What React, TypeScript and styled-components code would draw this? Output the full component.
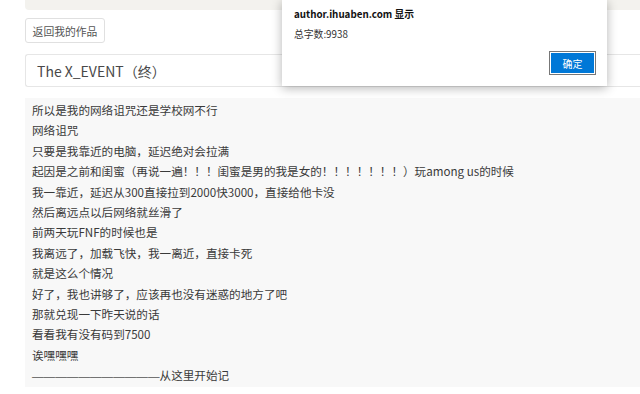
import React from 'react';
import styled, { createGlobalStyle } from 'styled-components';

const lines = [
  '所以是我的网络诅咒还是学校网不行',
  '网络诅咒',
  '只要是我靠近的电脑，延迟绝对会拉满',
  '起因是之前和闺蜜（再说一遍！！！闺蜜是男的我是女的！！！！！！！）玩among us的时候',
  '我一靠近，延迟从300直接拉到2000快3000，直接给他卡没',
  '然后离远点以后网络就丝滑了',
  '前两天玩FNF的时候也是',
  '我离远了，加载飞快，我一离近，直接卡死',
  '就是这么个情况',
  '好了，我也讲够了，应该再也没有迷惑的地方了吧',
  '那就兑现一下昨天说的话',
  '看看我有没有码到7500',
  '诶嘿嘿嘿',
];

export default function App() {
  return (
    <>
      <GlobalStyle />
      <Page>
        <TopBar />
        <BackButton>返回我的作品</BackButton>
        <TitleBox>The X_EVENT（终）</TitleBox>
        <Content>
          {lines.map((line, i) => (
            <Line key={i}>{line}</Line>
          ))}
          <Line>
            <Dashes>———————————</Dashes>从这里开始记
          </Line>
        </Content>
      </Page>

      <Dialog>
        <DialogTitle>author.ihuaben.com 显示</DialogTitle>
        <DialogText>总字数:9938</DialogText>
        <DialogFooter>
          <OkButton>确定</OkButton>
        </DialogFooter>
      </Dialog>
    </>
  );
}

const GlobalStyle = createGlobalStyle`
  html, body {
    margin: 0;
    padding: 0;
    background: #fff;
    overflow: hidden;
    font-family: "Noto Sans CJK SC", "Noto Sans", sans-serif;
  }
`;

const Page = styled.div`
  display: flex;
  flex-direction: column;
  align-items: flex-start;
  padding-left: 25px;
  width: 615px;
`;

const TopBar = styled.div`
  align-self: stretch;
  height: 10px;
  background: #f3f2ee;
  border-radius: 0 0 0 4px;
`;

const BackButton = styled.button`
  margin-top: 8px;
  height: 25px;
  width: 80px;
  padding: 0;
  background: #fff;
  border: 1px solid #e0e0e0;
  border-radius: 3px;
  font-family: inherit;
  font-size: 10.8px;
  color: #555;
`;

const TitleBox = styled.div`
  align-self: stretch;
  margin-top: 11px;
  height: 33px;
  box-sizing: border-box;
  border: 1px solid #e6e6e6;
  border-right: none;
  border-radius: 3px 0 0 3px;
  padding-left: 11px;
  display: flex;
  align-items: center;
  font-size: 14px;
  color: #484848;
`;

const Content = styled.div`
  align-self: stretch;
  margin-top: 11px;
  background: #f8f8f8;
  padding: 2px 0 3px 7px;
  height: 289px;
  box-sizing: border-box;
`;

const Line = styled.div`
  font-size: 11.6px;
  line-height: 20.4px;
  color: #3a3a3a;
  white-space: nowrap;
`;

const Dashes = styled.span`
  font-family: "Liberation Sans", sans-serif;
  color: #555;
`;

const Dialog = styled.div`
  position: absolute;
  left: 282px;
  top: 0;
  width: 325px;
  height: 86px;
  box-sizing: border-box;
  background: #fff;
  box-shadow: 0 2px 10px rgba(0, 0, 0, 0.3);
  padding: 6px 12px 0 12px;
  display: flex;
  flex-direction: column;
`;

const DialogTitle = styled.div`
  font-size: 9.8px;
  font-weight: 700;
  color: #111;
  line-height: 16px;
`;

const DialogText = styled.div`
  margin-top: 4px;
  font-size: 9.8px;
  color: #333;
  line-height: 16px;
`;

const DialogFooter = styled.div`
  display: flex;
  justify-content: flex-end;
  margin-top: 10px;
`;

const OkButton = styled.button`
  width: 45px;
  height: 22px;
  padding: 0;
  background: #0078d7;
  border: 1px solid #fff;
  outline: 1px solid #777;
  color: #fff;
  font-family: inherit;
  font-size: 10px;
`;
